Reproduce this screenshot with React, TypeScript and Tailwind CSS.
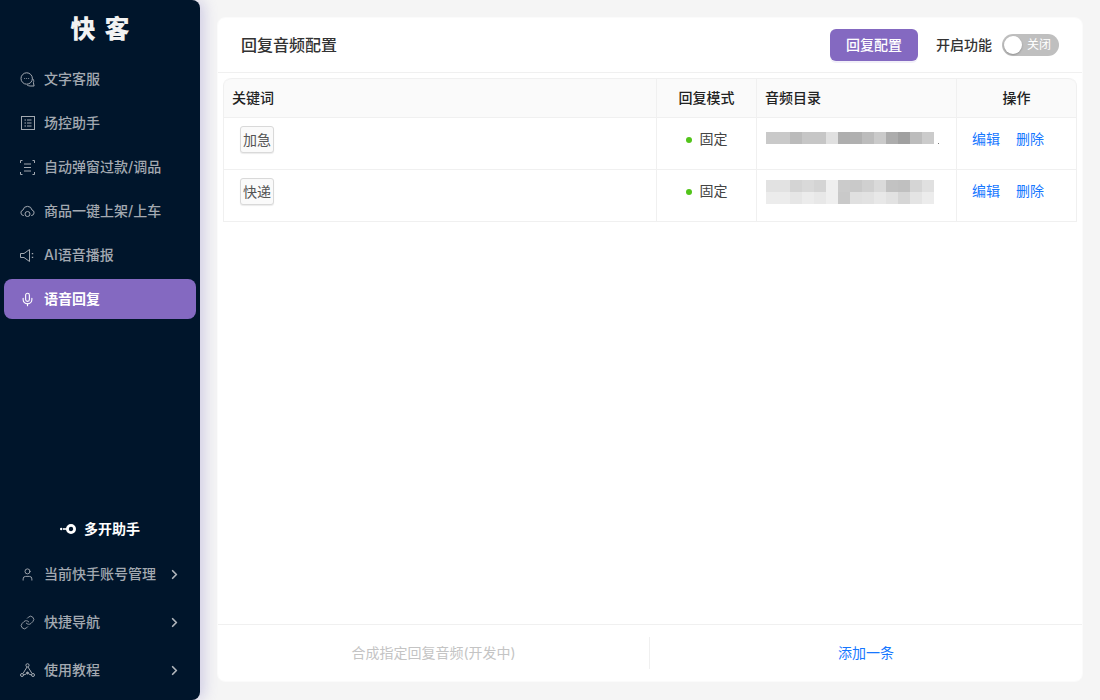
import React from "react";
import { ChevronRight, User, Link, Mic } from "lucide-react";

const IconChat = () => (
  <svg width="15" height="15" viewBox="0 0 15 15" fill="none" stroke="currentColor" strokeWidth="1">
    <circle cx="6.700" cy="6.500" r="5.700" />
    <path d="M12.400 6.500c1.300 1 1.700 2.700 1 4.200l.7 3.300h-4c-1 0-2-.3-3-1" />
    <path d="M4.300 6.500h.8M6.300 6.500h.8M8.300 6.500h.8" />
  </svg>
);
const IconList = () => (
  <svg width="14" height="14" viewBox="0 0 14 14" fill="none" stroke="currentColor" strokeWidth="1">
    <rect x=".5" y=".5" width="13" height="13" />
    <path d="M3.500 4h1.500M6 4h4.500M3.500 7h1.500M6 7h4.500M3.500 10h1.500M6 10h4.500" />
  </svg>
);
const IconScan = () => (
  <svg width="15" height="15" viewBox="0 0 15 15" fill="none" stroke="currentColor" strokeWidth="1">
    <path d="M.5 3V.5H2.500M12.500 .5h2V3M.5 12v2.500H2.500M12.500 14.500h2V12" />
    <path d="M4 4h7M4 7.500h7M4 11h7" />
  </svg>
);
const IconCloud = () => (
  <svg width="15" height="13" viewBox="0 0 15 13" fill="none" stroke="currentColor" strokeWidth="1">
    <path d="M4 10.500H3.500A2.800 2.800 0 0 1 3 5a4.600 4.600 0 0 1 9 0 2.800 2.800 0 0 1-.5 5.500H11" />
    <circle cx="7.500" cy="9" r="2.500" />
  </svg>
);
const IconSpeaker = () => (
  <svg width="15" height="15" viewBox="0 0 15 15" fill="none" stroke="currentColor" strokeWidth="1">
    <path d="M.5 5.500h3.500L9.500 1.500v12L4 9.500H.5z" />
    <path d="M12.500 5v1.200M12.500 8.800V10" strokeWidth="1.400" />
  </svg>
);
const IconNodes = () => (
  <svg width="15" height="15" viewBox="0 0 15 15" fill="none" stroke="currentColor" strokeWidth="1">
    <circle cx="7.500" cy="2.300" r="1.600" />
    <circle cx="2" cy="12" r="1.500" />
    <circle cx="13" cy="12" r="1.500" />
    <path d="M7 4L3 10.500M8 4l4 6.500M3.500 12l2.700-1M11.500 12l-2.700-1" />
    <circle cx="7.500" cy="10" r="1" fill="currentColor" />
  </svg>
);
const IconKey = () => (
  <svg width="16" height="10" viewBox="0 0 16 10" fill="none">
    <circle cx="11" cy="5" r="3.600" stroke="white" strokeWidth="2.800" />
    <path d="M3 5h5" stroke="white" strokeWidth="1.600" />
    <circle cx="1.200" cy="5" r="1.200" fill="white" />
  </svg>
);

const top = [
  { label: "文字客服", icon: <IconChat /> },
  { label: "场控助手", icon: <IconList /> },
  { label: "自动弹窗过款/调品", icon: <IconScan /> },
  { label: "商品一键上架/上车", icon: <IconCloud /> },
  { label: "AI语音播报", icon: <IconSpeaker /> },
];

const bottom = [
  { label: "当前快手账号管理", icon: <User size={17} strokeWidth={1.500} /> },
  { label: "快捷导航", icon: <Link size={15} strokeWidth={1.400} /> },
  { label: "使用教程", icon: <IconNodes /> },
];

const r1 = ["#c9c9c9","#c9c9c9","#bbbbbb","#c6c6c6","#c6c6c6","#e0e0e0","#aeaeae","#b0b0b0","#bcbcbc","#cacaca","#acacac","#a0a0a0","#bcbcbc","#cbcbcb"];
const r2 = ["#e2e2e2","#e2e2e2","#d4d4d4","#d9d9d9","#d4d4d4","#efefef","#cbcbcb","#c9c9c9","#d0d0d0","#dadada","#c2c2c2","#c0c0c0","#d5d5d5","#e0e0e0"];
const r3 = ["#ececec","#ececec","#e6e6e6","#ececec","#e8e8e8","#efefef","#c9c9c9","#e0e0e0","#e2e2e2","#e8e8e8","#e2e2e2","#d6d6d6","#e4e4e4","#ececec"];

const Mosaic = ({ rows }: { rows: string[][] }) => (
  <div className="flex flex-col">
    {rows.map((row, i) => (
      <div key={i} className="flex h-3">
        {row.map((c, j) => (
          <div key={j} className="w-3 h-3" style={{ backgroundColor: c }} />
        ))}
      </div>
    ))}
  </div>
);

const Row = ({ kw, children }: { kw: string; children: React.ReactNode }) => (
  <div className="grid grid-cols-[433px_100px_200px_119px] h-[52px] border-b border-[#f0f0f0]">
    <div className="border-r border-[#f0f0f0] pl-4 pt-2">
      <span className="inline-flex items-center justify-center w-[34px] h-[27px] border border-[#d9d9d9] rounded-[3px] bg-[#fafafa] text-sm text-[#555] shadow-[0_1px_1px_rgba(0,0,0,0.08)]">
        {kw}
      </span>
    </div>
    <div className="border-r border-[#f0f0f0] flex items-start justify-center pt-[12px] text-sm text-[#444] leading-[18px]">
      <span className="w-[6px] h-[6px] rounded-full bg-[#52c41a] mt-[7px] mr-2" />
      固定
    </div>
    <div className="border-r border-[#f0f0f0] pl-[9px]">{children}</div>
    <div className="flex items-start pl-[15px] pt-3 gap-[16px] text-sm text-[#1677ff] leading-[18px]">
      <span>编辑</span>
      <span>删除</span>
    </div>
  </div>
);

export default function App() {
  return (
    <div
      className="flex w-[1100px] h-[700px] bg-[#f5f5f5] overflow-hidden"
      style={{ fontFamily: '"Inter", "Noto Sans CJK SC", sans-serif' }}
    >
      <aside className="w-[200px] h-full shrink-0 bg-[#00152b] rounded-r-lg flex flex-col pb-[6px] shadow-[4px_0_14px_rgba(120,110,190,0.3)]">
        <div className="h-[59px] flex items-start justify-center pt-[9px] pl-[9px] text-[25px] leading-[40px] font-black text-[#f2f2f2] tracking-[9px]">
          快客
        </div>
        <nav className="flex flex-col gap-1 px-1">
          {top.map((it) => (
            <div key={it.label} className="h-10 flex items-center pl-4 gap-[9px] text-sm font-medium text-[#a3a9b1]">
              <span className="w-[15px] flex justify-center shrink-0">{it.icon}</span>
              {it.label}
            </div>
          ))}
          <div className="h-10 flex items-center pl-4 gap-[9px] text-sm font-bold text-white rounded-lg bg-[#8469c1]">
            <span className="w-[15px] flex justify-center shrink-0"><Mic size={17} strokeWidth={1.800} /></span>
            语音回复
          </div>
        </nav>
        <div className="mt-auto flex flex-col">
          <div className="h-6 flex items-center justify-center gap-2 text-sm font-bold text-white mb-[9px]">
            <IconKey />
            多开助手
          </div>
          {bottom.map((it) => (
            <div key={it.label} className="h-12 flex items-center pl-5 gap-[9px] text-sm font-medium text-[#a3a9b1]">
              <span className="w-[15px] flex justify-center shrink-0">{it.icon}</span>
              <span className="flex-1">{it.label}</span>
              <ChevronRight size={15} strokeWidth={2.800} className="mr-[18px] text-[#b0b5bb]" />
            </div>
          ))}
        </div>
      </aside>

      <main className="flex-1 px-[17px] pt-[17px] pb-[18px] min-w-0 flex">
        <div className="flex-1 bg-white rounded-lg flex flex-col border border-[#fbfbfb]">
          <header className="h-[55px] shrink-0 flex items-center border-b border-[#f0f0f0] pl-[23px] pr-[23px]">
            <h1 className="text-base font-medium text-[#333] flex-1">回复音频配置</h1>
            <button className="w-[88px] h-8 rounded-md bg-[#8469c1] text-sm font-medium text-white shadow-[0_2px_0_rgba(132,105,193,0.1)]">
              回复配置
            </button>
            <span className="ml-[18px] text-sm font-medium text-[#333]">开启功能</span>
            <div className="ml-[10px] w-[57px] h-[22px] rounded-full bg-[#bfbfbf] flex items-center pl-[2px]">
              <span className="w-[18px] h-[18px] rounded-full bg-white shadow-[0_1px_2px_rgba(0,0,0,0.25)]" />
              <span className="ml-[5px] text-xs text-white">关闭</span>
            </div>
          </header>

          <div className="flex-1 pl-[5px] pt-[5px]">
            <div className="w-[854px] border-l border-r border-[#f0f0f0] rounded-t-lg">
              <div className="grid grid-cols-[433px_100px_200px_119px] h-10 bg-[#fafafa] border-t border-b border-[#f0f0f0] rounded-t-lg text-sm font-medium text-[#222]">
                <div className="border-r border-[#f0f0f0] pl-2 flex items-center">关键词</div>
                <div className="border-r border-[#f0f0f0] flex items-center justify-center">回复模式</div>
                <div className="border-r border-[#f0f0f0] pl-2 flex items-center">音频目录</div>
                <div className="flex items-center justify-center">操作</div>
              </div>
              <Row kw="加急">
                <div className="flex items-end pt-[14px]">
                  <Mosaic rows={[r1]} />
                  <span className="w-px h-px ml-[4px] bg-[#777]" />
                </div>
              </Row>
              <Row kw="快递">
                <div className="pt-[10px]">
                  <Mosaic rows={[r2, r3]} />
                </div>
              </Row>
            </div>
          </div>

          <footer className="h-[57px] shrink-0 border-t border-[#f0f0f0] flex items-center text-sm">
            <div className="w-[432px] h-8 flex items-center justify-center border-r border-[#f0f0f0] text-[#c4c4c4]">
              合成指定回复音频(开发中)
            </div>
            <div className="flex-1 flex items-center justify-center text-[#1677ff]">添加一条</div>
          </footer>
        </div>
      </main>
    </div>
  );
}
